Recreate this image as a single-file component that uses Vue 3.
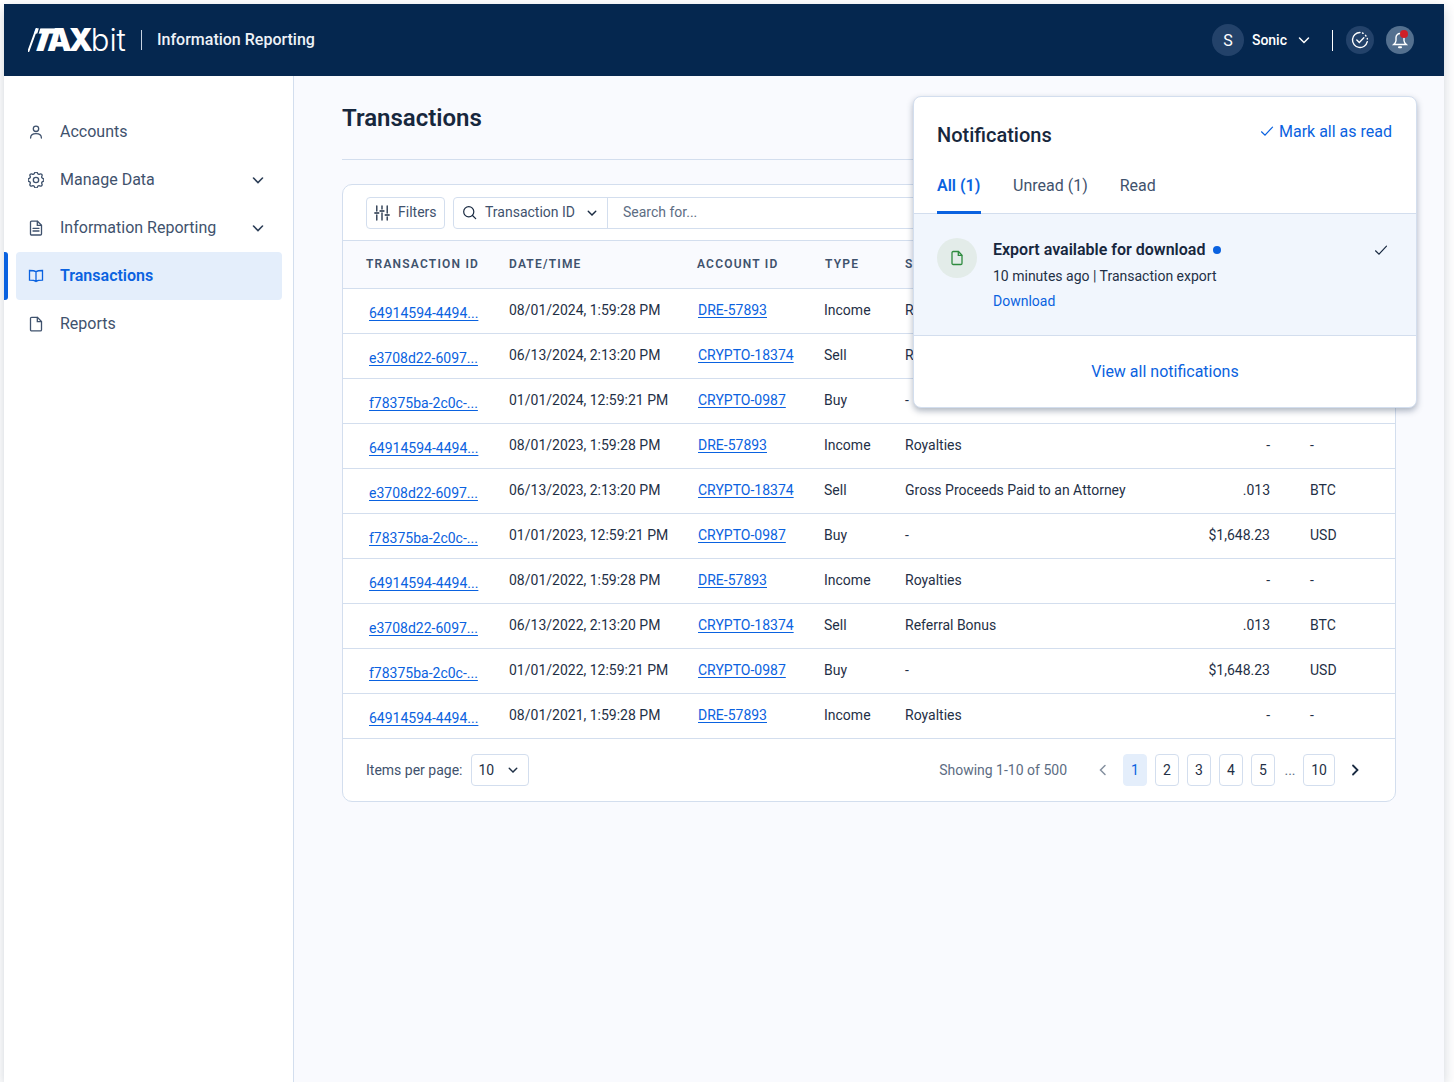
<script setup>
const nav = [
  { label: 'Accounts', icon: 'user' },
  { label: 'Manage Data', icon: 'gear', chevron: true },
  { label: 'Information Reporting', icon: 'doc', chevron: true },
  { label: 'Transactions', icon: 'book', active: true },
  { label: 'Reports', icon: 'file' },
]
const ids = ['64914594-4494...', 'e3708d22-6097...', 'f78375ba-2c0c-...']
const accts = ['DRE-57893', 'CRYPTO-18374', 'CRYPTO-0987']
const types = ['Income', 'Sell', 'Buy']
const times = ['1:59:28 PM', '2:13:20 PM', '12:59:21 PM']
const days = ['08/01', '06/13', '01/01']
const years = [2024, 2024, 2024, 2023, 2023, 2023, 2022, 2022, 2022, 2021]
const subs = ['Royalties', 'Referral Bonus', '-', 'Royalties', 'Gross Proceeds Paid to an Attorney', '-', 'Royalties', 'Referral Bonus', '-', 'Royalties']
const rows = years.map((y, i) => {
  const k = i % 3
  return {
    id: ids[k],
    date: `${days[k]}/${y}, ${times[k]}`,
    acct: accts[k],
    type: types[k],
    sub: subs[i],
    amount: k === 0 ? '-' : k === 1 ? '.013' : '$1,648.23',
    cur: k === 0 ? '-' : k === 1 ? 'BTC' : 'USD',
  }
})
const pages = ['2', '3', '4', '5']
</script>

<template>
  <div class="frame">
    <header class="topbar">
      <div class="brand">
        <span class="logo">
          <span class="logo-tax"><span class="logo-t">T</span><span>AX</span></span>
          <span class="logo-bit">bit</span>
          <svg class="logo-slash" viewBox="0 0 30 24"><path class="sl-white" d="M8.500 1L0.500 23" /><path class="sl-navy" d="M12 -1L4 25" /></svg>
        </span>
        <span class="vline"></span>
        <span class="product">Information Reporting</span>
      </div>
      <div class="top-right">
        <span class="avatar">S</span>
        <span class="uname">Sonic</span>
        <svg class="uchev" viewBox="0 0 12 12"><path d="M1.500 4l4.500 4.500L10.500 4" /></svg>
        <span class="vline right"></span>
        <span class="round">
          <svg viewBox="0 0 18 18"><path d="M9 1.500A7.500 7.500 0 1 0 16.300 10.700" /><path d="M5.800 9l2.500 2.500L12.800 6.800" /><path d="M11.500 2l.7.3M14.500 4.300l.5.7M16.300 7.500v.5" /></svg>
        </span>
        <span class="round bell">
          <svg viewBox="0 0 18 18"><path d="M9 2.500a4 4 0 0 0-4 4v3c0 1.500-1.200 3-2.300 4h12.600c-1.100-1-2.300-2.500-2.300-4v-3a4 4 0 0 0-4-4z" /><path class="clap" d="M8 16.200h2" /></svg>
          <i class="red"></i>
        </span>
      </div>
    </header>

    <div class="body">
      <aside class="side">
        <div v-for="n in nav" :key="n.label" class="nav" :class="{ active: n.active }">
          <svg class="nicon" viewBox="0 0 16 16">
            <template v-if="n.icon === 'user'"><circle cx="8" cy="4.800" r="2.700" /><path d="M2.600 14c0-2.800 2-4.300 5.400-4.300s5.400 1.500 5.400 4.300" /></template>
            <template v-else-if="n.icon === 'gear'"><g transform="translate(-2.670 -2.670) scale(.889)" stroke-width="1.500"><path d="M10.325 4.317c.426 -1.756 2.924 -1.756 3.350 0a1.724 1.724 0 0 0 2.573 1.066c1.543 -.94 3.310 .826 2.370 2.370a1.724 1.724 0 0 0 1.065 2.572c1.756 .426 1.756 2.924 0 3.350a1.724 1.724 0 0 0 -1.066 2.573c.94 1.543 -.826 3.310 -2.370 2.370a1.724 1.724 0 0 0 -2.572 1.065c-.426 1.756 -2.924 1.756 -3.350 0a1.724 1.724 0 0 0 -2.573 -1.066c-1.543 .94 -3.310 -.826 -2.370 -2.370a1.724 1.724 0 0 0 -1.065 -2.572c-1.756 -.426 -1.756 -2.924 0 -3.350a1.724 1.724 0 0 0 1.066 -2.573c-.94 -1.543 .826 -3.310 2.370 -2.370c1 .608 2.296 .07 2.572 -1.065z" /><circle cx="12" cy="12" r="3" /></g></template>
            <template v-else-if="n.icon === 'doc'"><path d="M2.500 2.300c0-.6.500-1.100 1.100-1.100h5.900l4 4.100v8.600c0 .6-.5 1.100-1.100 1.100H3.600c-.6 0-1.100-.5-1.100-1.100z" /><path d="M9.300 1.400v4h4M5 8.300h6M5 11h6" /></template>
            <template v-else-if="n.icon === 'book'"><path d="M8 3.800C6.800 2.900 5 2.500 1.500 2.500v9.700c3.500 0 5.300.4 6.500 1.300 1.200-.9 3-1.300 6.500-1.300V2.500c-3.500 0-5.300.4-6.500 1.300zM8 3.800v9.700" /></template>
            <template v-else><path d="M2.500 2.500c0-.7.500-1.200 1.200-1.200h5.800l4 4.200v8.200c0 .7-.5 1.200-1.200 1.200H3.700c-.7 0-1.200-.5-1.200-1.200z" /><path d="M9.300 1.500v4.200h4" /></template>
          </svg>
          <span class="nlabel">{{ n.label }}</span>
          <svg v-if="n.chevron" class="nchev" viewBox="0 0 12 12"><path d="M1.500 4l4.500 4.500L10.500 4" /></svg>
        </div>
      </aside>

      <main class="main">
        <h1 class="title">Transactions</h1>
        <div class="rule"></div>

        <section class="card">
          <div class="toolbar">
            <button class="filters">
              <svg viewBox="0 0 16 16"><path d="M2.800 1v5M2.800 10v5M8 1v3M8 8v7M13.200 1v7M13.200 12v3M.8 8h4M6 6h4M11.200 10h4" /></svg>
              Filters
            </button>
            <div class="search">
              <div class="search-type">
                <svg class="glass" viewBox="0 0 16 16"><circle cx="7.200" cy="7.200" r="5.400" /><path d="M11.200 11.200L14.600 14.600" /></svg>
                <span class="stype">Transaction ID</span>
                <svg class="schev" viewBox="0 0 12 12"><path d="M1.500 4l4.500 4.500L10.500 4" /></svg>
              </div>
              <span class="placeholder">Search for...</span>
            </div>
          </div>

          <div class="row head">
            <span class="c1">TRANSACTION ID</span>
            <span class="c2">DATE/TIME</span>
            <span class="c3">ACCOUNT ID</span>
            <span class="c4">TYPE</span>
            <span class="c5">SUBTYPE</span>
            <span class="c6">AMOUNT</span>
            <span class="c7">ASSET</span>
          </div>
          <div v-for="(r, i) in rows" :key="i" class="row data">
            <span class="c1"><a class="link idlink">{{ r.id }}</a></span>
            <span class="c2">{{ r.date }}</span>
            <span class="c3"><a class="link">{{ r.acct }}</a></span>
            <span class="c4">{{ r.type }}</span>
            <span class="c5">{{ r.sub }}</span>
            <span class="c6">{{ r.amount }}</span>
            <span class="c7">{{ r.cur }}</span>
          </div>

          <footer class="foot">
            <span class="ipp">Items per page:</span>
            <div class="size"><span>10</span><svg viewBox="0 0 12 12"><path d="M1.500 4l4.500 4.500L10.500 4" /></svg></div>
            <span class="showing">Showing 1-10 of 500</span>
            <svg class="arrow prev" viewBox="0 0 12 12"><path d="M8 1.500L3.500 6 8 10.500" /></svg>
            <span class="pg current">1</span>
            <span v-for="p in pages" :key="p" class="pg">{{ p }}</span>
            <span class="dots">...</span>
            <span class="pg wide">10</span>
            <svg class="arrow nextp" viewBox="0 0 12 12"><path d="M4 1.500L8.500 6 4 10.500" /></svg>
          </footer>
        </section>

        <div class="panel">
          <div class="p-head">
            <h2>Notifications</h2>
            <a class="mark">
              <svg viewBox="0 0 14 14"><path d="M1.500 7.800L5 11.200 12.500 3.200" /></svg>
              Mark all as read
            </a>
          </div>
          <div class="tabs">
            <span class="tab on">All (1)</span>
            <span class="tab">Unread (1)</span>
            <span class="tab">Read</span>
          </div>
          <div class="item">
            <span class="badge">
              <svg viewBox="0 0 16 16"><path d="M3 2.700c0-.7.500-1.200 1.200-1.200h5.300l3.500 3.700v8.100c0 .7-.5 1.200-1.200 1.200H4.200c-.7 0-1.200-.5-1.200-1.200z" /><path d="M9.300 1.700v3.600h3.500" /></svg>
            </span>
            <div class="i-text">
              <div class="i-title">Export available for download <i class="dot"></i></div>
              <div class="i-meta">10 minutes ago | Transaction export</div>
              <a class="i-link">Download</a>
            </div>
            <svg class="i-check" viewBox="0 0 14 14"><path d="M1.500 7.800L5 11.200 12.500 3.200" /></svg>
          </div>
          <div class="p-foot"><a>View all notifications</a></div>
        </div>
      </main>
    </div>
  </div>
</template>

<style>
html, body { margin: 0; background: #fff; }
</style>

<style scoped>
* { box-sizing: border-box; }
svg { fill: none; stroke: currentColor; stroke-linecap: round; flex: none; }
.frame {
  width: 1440px; height: 1078px; margin: 4px 0 0 4px;
  display: flex; flex-direction: column;
  font-family: Roboto, "Liberation Sans", sans-serif;
  background: #f9fafe; color: #1a2b42;
  box-shadow: 0 4px 12px rgba(20, 40, 70, .2);
}
.topbar {
  height: 72px; flex: none; background: #05274f; color: #fff;
  display: flex; align-items: center; justify-content: space-between;
  padding: 0 30px 0 24px;
}
.brand { display: flex; align-items: center; }
.logo { display: flex; align-items: center; white-space: nowrap; width: 99px; height: 30px; color: #fff; position: relative; }
.logo-tax { display: inline-flex; flex: none; font: 900 31px/30px Inter, sans-serif; letter-spacing: -3.200px; }
.logo-t { display: inline-block; transform: skewX(-18deg) scaleX(1.150); transform-origin: left center; margin-left: 3px; margin-right: -2px; }
.logo-bit { flex: none; font: 300 31px/30px Inter, sans-serif; margin-left: 1px; }
.logo-slash { position: absolute; left: 0; top: 3px; width: 30px; height: 24px; overflow: hidden; }
.sl-navy { stroke: #05274f; stroke-width: 1.400; }
.sl-white { stroke: #fff; stroke-width: 2; }
.vline { width: 1px; height: 20px; background: #c6d2e0; margin: 0 15px 0 14px; }
.product { font-size: 16px; font-weight: 500; color: #eef2f7; margin-bottom: 2px; }
.top-right { display: flex; align-items: center; }
.avatar {
  width: 32px; height: 32px; border-radius: 50%; background: #23426a;
  display: flex; align-items: center; justify-content: center; font-size: 16px; margin-right: 8px;
}
.uname { font-size: 14px; font-weight: 500; margin-bottom: 1px; }
.uchev { width: 12px; height: 12px; margin-left: 11px; stroke-width: 1.500; }
.vline.right { background: #fff; height: 21px; margin: 0 13px 0 22px; }
.round {
  width: 28px; height: 28px; border-radius: 50%; background: #23426a;
  display: flex; align-items: center; justify-content: center; position: relative;
}
.round svg { width: 18px; height: 18px; stroke-width: 1.400; }
.clap { stroke-width: 2; }
.bell { background: #54708f; margin-left: 12px; }
.red { position: absolute; top: 4px; right: 6px; width: 8px; height: 8px; border-radius: 50%; background: #cf2028; }

.body { flex: 1; display: flex; min-height: 0; }
.side {
  width: 290px; flex: none; background: #fff; border-right: 1px solid #d3deee;
  padding: 32px 11px 0 12px;
}
.nav {
  height: 48px; display: flex; align-items: center; padding: 0 16px 0 12px;
  border-radius: 4px; position: relative; color: #3f526d; font-size: 16px;
}
.nicon { width: 16px; height: 16px; stroke-width: 1.300; margin-right: 16px; }
.nlabel { flex: 1; margin-bottom: 2px; }
.nchev { width: 12px; height: 12px; stroke-width: 1.600; margin-right: 2px; color: #2c3e57; }
.nav.active { background: #e4eefb; color: #0a62e0; font-weight: 600; }
.nav.active::before {
  content: ''; position: absolute; left: -12px; top: 0; bottom: 0; width: 4px;
  background: #0a62e0; border-radius: 0 3px 3px 0;
}
.main { flex: 1; position: relative; padding: 0 48px 0 48px; min-width: 0; }
.title { margin: 0; padding-top: 27px; height: 83px; font-size: 24px; line-height: 30px; font-weight: 600; color: #17273d; }
.rule { height: 1px; background: #d3deee; margin-bottom: 24px; }

.card { background: #fff; border: 1px solid #d3deee; border-radius: 10px; overflow: hidden; height: 618px; }
.toolbar { height: 55px; display: flex; align-items: center; padding: 0 23px; gap: 8px; }
.filters {
  height: 32px; width: 79px; background: #fff; border: 1px solid #d3deee; border-radius: 4px;
  display: flex; align-items: center; padding: 0 7px 1px; gap: 8px;
  font: 14px Roboto, sans-serif; color: #3f526d;
}
.filters svg { width: 16px; height: 16px; stroke-width: 1.300; color: #1a2b42; margin-top: 1px; }
.search { flex: 1; height: 32px; border: 1px solid #d3deee; border-radius: 4px; display: flex; align-items: center; }
.search-type {
  width: 154px; height: 100%; border-right: 1px solid #d3deee; display: flex; align-items: center;
  padding-left: 8px; font-size: 14px; color: #3f526d;
}
.stype { margin-bottom: 1px; }
.glass { width: 15px; height: 15px; stroke-width: 1.300; margin-right: 8px; color: #1a2b42; }
.schev { width: 10px; height: 10px; margin-left: 12px; stroke-width: 1.700; color: #1a2b42; }
.placeholder { padding-left: 15px; font-size: 14px; color: #5d6d83; margin-bottom: 1px; }

.row { display: grid; grid-template-columns: 143px 188px 128px 80px 290px 75px 1fr; padding-left: 23px; align-items: center; }
.head {
  height: 49px; background: #f9fafe; border-top: 1px solid #d3deee; border-bottom: 1px solid #d3deee;
  font-size: 12px; font-weight: 600; letter-spacing: 1.200px; color: #3f526d;
  padding-bottom: 2px;
}
.data { height: 45px; border-bottom: 1px solid #d3deee; font-size: 14px; color: #1f3046; padding-bottom: 2px; }
.link { color: #0a62e0; text-decoration: underline; text-underline-offset: 2px; margin-left: 1px; }
.idlink { margin-left: 3px; position: relative; top: 3px; }
.c4 { margin-left: -1px; }
.head .c4 { margin-left: 0; }
.c6 { text-align: right; }
.c7 { padding-left: 40px; }

.foot { height: 62px; display: flex; align-items: center; padding: 0 34px 0 23px; font-size: 14px; }
.ipp { color: #3f526d; margin-right: 9px; }
.size {
  width: 58px; height: 32px; border: 1px solid #d3deee; border-radius: 4px;
  display: flex; align-items: center; justify-content: space-between; padding: 0 10px 0 6px; color: #1f3046;
}
.size svg { width: 10px; height: 10px; stroke-width: 1.700; }
.showing { margin-left: auto; margin-right: 30px; color: #5d6d83; }
.arrow { width: 12px; height: 12px; stroke-width: 1.500; margin-right: 14px; color: #1a2b42; }
.prev { color: #84909f; }
.nextp { margin: 0 0 0 14px; stroke-width: 1.800; }
.pg {
  width: 24px; height: 32px; border: 1px solid #d3deee; border-radius: 4px; margin-right: 8px;
  display: flex; align-items: center; justify-content: center; color: #1f3046;
}
.pg.current { background: #e4eefb; border-color: #e4eefb; color: #0a62e0; }
.pg.wide { width: 32px; margin-right: 0; }
.dots { width: 20px; margin-left: -3px; margin-right: 3px; text-align: center; color: #5d6d83; }

.panel {
  position: absolute; left: 619px; top: 20px; width: 504px; height: 312px;
  background: #fff; border: 1px solid #d3deee; border-radius: 8px; overflow: hidden;
  box-shadow: 0 3px 6px rgba(30, 50, 80, .35);
  display: flex; flex-direction: column;
}
.p-head { height: 68px; flex: none; display: flex; justify-content: space-between; padding: 24px 24px 0 23px; }
.p-head h2 { margin: 0; font-size: 20px; line-height: 28px; font-weight: 500; color: #17273d; }
.mark { display: flex; align-items: center; height: 20px; font-size: 16px; color: #0a62e0; gap: 5px; }
.mark svg { width: 14px; height: 14px; stroke-width: 1.200; }
.tabs { height: 49px; flex: none; display: flex; gap: 32px; padding-left: 23px; border-bottom: 1px solid #d3deee; }
.tab { height: 49px; padding-top: 11px; font-size: 16px; line-height: 20px; color: #3f526d; }
.tab.on { color: #0a62e0; font-weight: 600; width: 44px; border-bottom: 3px solid #0a62e0; }
.item { height: 122px; flex: none; background: #f1f6fd; border-bottom: 1px solid #d3deee; display: flex; padding: 24px 28px 0 23px; }
.badge {
  width: 40px; height: 40px; border-radius: 50%; background: #e3ece9; color: #2e8b3f;
  display: flex; align-items: center; justify-content: center; margin-right: 16px; flex: none;
}
.badge svg { width: 16px; height: 16px; stroke-width: 1.300; }
.i-text { flex: 1; }
.i-title { font-size: 16px; line-height: 24px; font-weight: 600; color: #17273d; display: flex; align-items: center; }
.dot { width: 8px; height: 8px; border-radius: 50%; background: #0a62e0; margin-left: 8px; }
.i-meta { font-size: 14px; line-height: 20px; margin-top: 4px; color: #1f3046; }
.i-link { display: block; font-size: 14px; line-height: 20px; margin-top: 5px; color: #0a62e0; }
.i-check { width: 14px; height: 14px; stroke-width: 1.200; margin-top: 5px; color: #1a2b42; }
.p-foot { flex: 1; display: flex; align-items: center; justify-content: center; font-size: 16px; color: #0a62e0; }
</style>
